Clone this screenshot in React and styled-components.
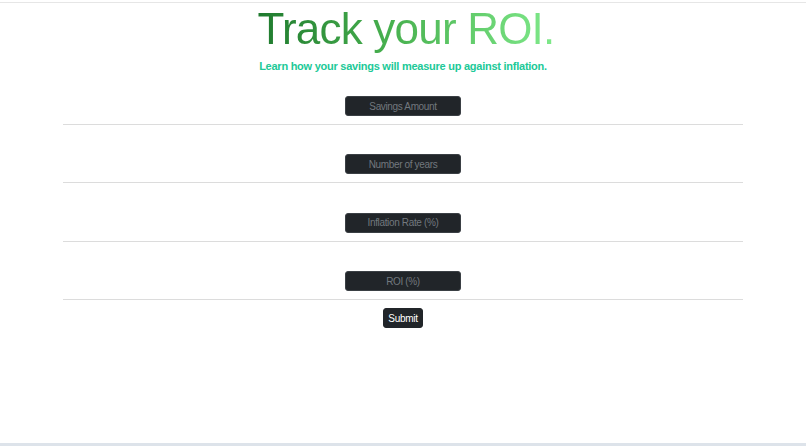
import styled, { createGlobalStyle } from "styled-components";

const GlobalStyle = createGlobalStyle`
  html, body {
    margin: 0;
    padding: 0;
    background: #ffffff;
    font-family: "Liberation Sans", Arial, sans-serif;
  }
`;

const Page = styled.div`
  box-sizing: border-box;
  min-height: 444px;
  margin-top: 2px;
  border-top: 1px solid #e6e6e6;
  border-bottom: 3px solid #dde3ea;
  display: flex;
  flex-direction: column;
  align-items: center;
`;

const Title = styled.h1`
  margin: 0 0 0 6px;
  font-size: 44px;
  font-weight: 400;
  letter-spacing: -0.8px;
  line-height: 52px;
  background: linear-gradient(90deg, #1f7a2e 0%, #48b14f 45%, #7fe98a 100%);
  -webkit-background-clip: text;
  background-clip: text;
  color: transparent;
`;

const Subtitle = styled.p`
  margin: 5px 0 0;
  font-size: 11px;
  font-weight: 700;
  letter-spacing: -0.25px;
  color: #20c997;
`;

const Form = styled.form`
  width: 680px;
  margin-top: 24px;
  display: flex;
  flex-direction: column;
  align-items: center;
`;

const Field = styled.div`
  width: 100%;
  display: flex;
  flex-direction: column;
  align-items: center;
  margin-bottom: ${(p) => (p.$last ? "8px" : "29.4px")};
`;

const Input = styled.input`
  box-sizing: border-box;
  width: 116px;
  height: 20px;
  padding: 0 4px;
  background: #212529;
  border: 1px solid #3a3f44;
  border-radius: 3px;
  color: #ffffff;
  font-family: inherit;
  font-size: 10px;
  letter-spacing: -0.35px;
  text-align: center;
  outline: none;

  &::placeholder {
    color: #72787e;
  }
`;

const Divider = styled.hr`
  width: 100%;
  margin: 8px 0 0;
  border: 0;
  border-top: 1px solid #dcdcdc;
`;

const SubmitButton = styled.button`
  box-sizing: border-box;
  width: 40px;
  height: 20px;
  padding: 0;
  background: #212529;
  border: 1px solid #212529;
  border-radius: 3px;
  color: #ffffff;
  font-family: inherit;
  font-size: 10px;
  letter-spacing: -0.3px;
  cursor: pointer;
`;

const fields = ["Savings Amount", "Number of years", "Inflation Rate (%)", "ROI (%)"];

function App() {
  return (
    <>
      <GlobalStyle />
      <Page>
        <Title>Track your ROI.</Title>
        <Subtitle>Learn how your savings will measure up against inflation.</Subtitle>
        <Form onSubmit={(e) => e.preventDefault()}>
          {fields.map((name, i) => (
            <Field key={name} $last={i === fields.length - 1}>
              <Input type="text" placeholder={name} />
              <Divider />
            </Field>
          ))}
          <SubmitButton type="submit">Submit</SubmitButton>
        </Form>
      </Page>
    </>
  );
}

export default App;
